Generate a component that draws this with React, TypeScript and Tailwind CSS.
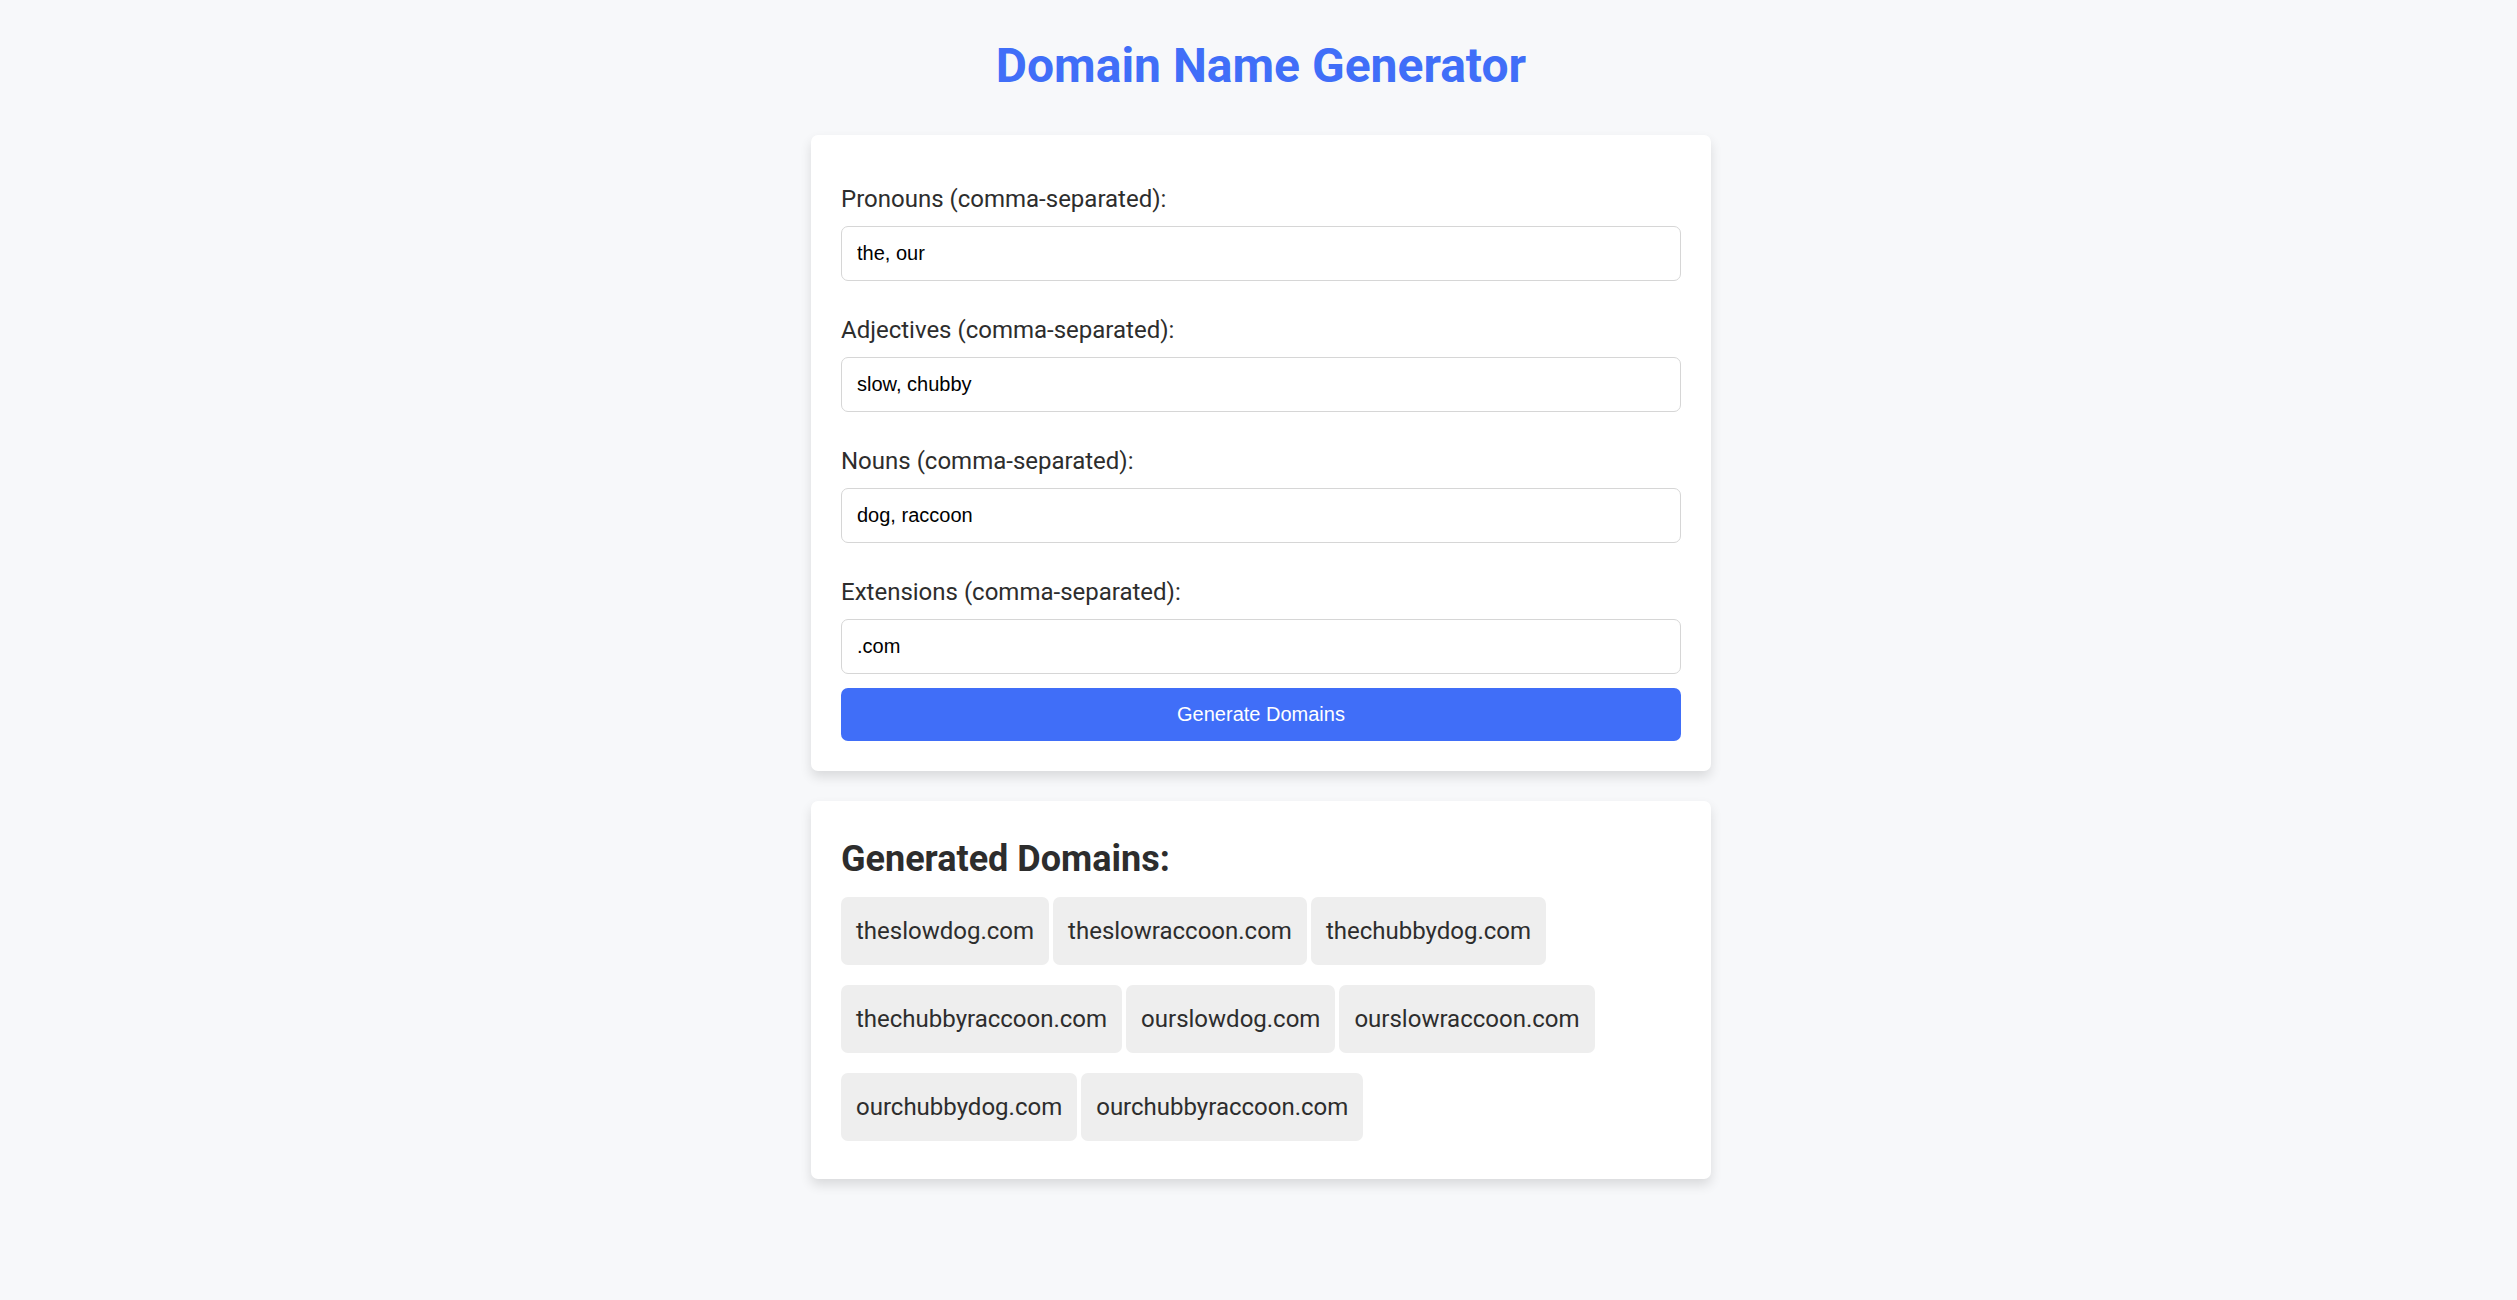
import { useState } from "react";
import type { FormEvent } from "react";

const fields = [
  { id: "pronouns", label: "Pronouns", value: "the, our" },
  { id: "adjectives", label: "Adjectives", value: "slow, chubby" },
  { id: "nouns", label: "Nouns", value: "dog, raccoon" },
  { id: "extensions", label: "Extensions", value: ".com" },
];

function split(value: string) {
  return value
    .split(",")
    .map((word) => word.trim())
    .filter(Boolean);
}

function combine(values: string[]) {
  return values
    .map(split)
    .reduce((names, words) => names.flatMap((name) => words.map((word) => name + word)), [""]);
}

export default function App() {
  const [values, setValues] = useState(fields.map((field) => field.value));
  const [domains, setDomains] = useState(() => combine(values));

  function submit(event: FormEvent) {
    event.preventDefault();
    setDomains(combine(values));
  }

  return (
    <div className="min-h-screen bg-[#f7f8fa] pt-7 pb-8 pl-[5px] font-['Roboto',sans-serif] text-2xl text-[#2d2d2d]">
      <main className="mx-auto max-w-[900px]">
        <h1 className="mb-8 text-center text-5xl leading-[75px] font-bold text-[#406ef8]">Domain Name Generator</h1>

        <form
          onSubmit={submit}
          className="mb-[30px] rounded-[7px] bg-white px-[30px] pt-[45px] pb-[30px] shadow-[0_6px_12px_rgba(0,0,0,0.12)]"
        >
          <div className="flex flex-col gap-[30px]">
            {fields.map((field, index) => (
              <div key={field.id} className="flex flex-col gap-2">
                <label htmlFor={field.id} className="leading-[38px]">
                  {field.label} (comma-separated):
                </label>
                <input
                  id={field.id}
                  type="text"
                  value={values[index]}
                  onChange={(event) => setValues(values.map((v, i) => (i === index ? event.target.value : v)))}
                  className="w-full rounded-[7px] border border-[#d6d6d6] bg-white p-[15px] font-['Liberation_Sans',sans-serif] text-xl leading-[23px] text-black"
                />
              </div>
            ))}
          </div>
          <button
            type="submit"
            className="mt-[14px] w-full cursor-pointer rounded-[7px] bg-[#406ef8] p-[15px] font-['Liberation_Sans',sans-serif] text-xl leading-[23px] text-white"
          >
            Generate Domains
          </button>
        </form>

        <section className="rounded-[7px] bg-white px-[30px] pt-[30px] pb-[38px] shadow-[0_6px_12px_rgba(0,0,0,0.12)]">
          <h2 className="mb-[9px] text-4xl leading-[57px] font-bold">Generated Domains:</h2>
          <ul className="flex flex-wrap gap-x-1 gap-y-5">
            {domains.map((domain) => (
              <li key={domain} className="rounded-[7px] bg-[#eeeeee] p-[15px] leading-[38px]">
                {domain}
              </li>
            ))}
          </ul>
        </section>
      </main>
    </div>
  );
}
